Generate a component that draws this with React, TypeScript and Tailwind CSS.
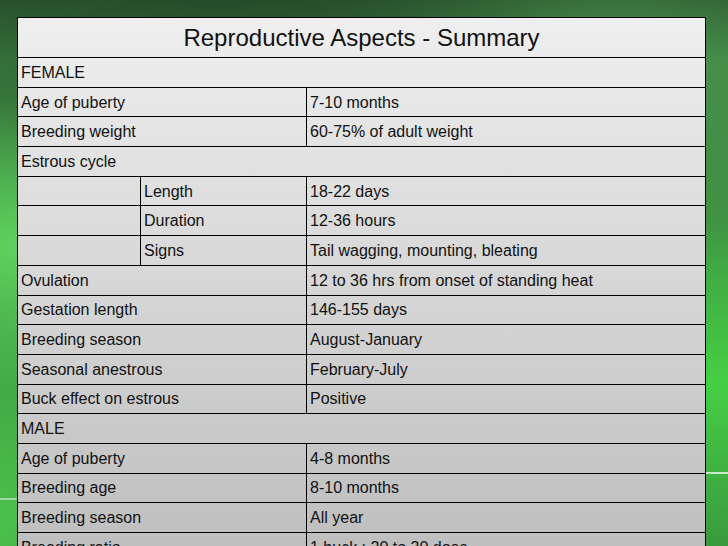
import React from "react";

type Row =
  | { kind: "full"; label: string }
  | { kind: "two"; label: string; value: string }
  | { kind: "three"; label: string; value: string };

const rows: Row[] = [
  { kind: "full", label: "FEMALE" },
  { kind: "two", label: "Age of puberty", value: "7-10 months" },
  { kind: "two", label: "Breeding weight", value: "60-75% of adult weight" },
  { kind: "full", label: "Estrous cycle" },
  { kind: "three", label: "Length", value: "18-22 days" },
  { kind: "three", label: "Duration", value: "12-36 hours" },
  { kind: "three", label: "Signs", value: "Tail wagging, mounting, bleating" },
  { kind: "two", label: "Ovulation", value: "12 to 36 hrs from onset of standing heat" },
  { kind: "two", label: "Gestation length", value: "146-155 days" },
  { kind: "two", label: "Breeding season", value: "August-January" },
  { kind: "two", label: "Seasonal anestrous", value: "February-July" },
  { kind: "two", label: "Buck effect on estrous", value: "Positive" },
  { kind: "full", label: "MALE" },
  { kind: "two", label: "Age of puberty", value: "4-8 months" },
  { kind: "two", label: "Breeding age", value: "8-10 months" },
  { kind: "two", label: "Breeding season", value: "All year" },
  { kind: "two", label: "Breeding ratio", value: "1 buck : 20 to 30 does" },
];

function TableRow({ row }: { row: Row }) {
  const base = "flex h-[29.7px] shrink-0 border-b border-black";
  const cell = "flex items-center pl-[3px] pt-[1px] overflow-hidden whitespace-nowrap";
  if (row.kind === "full") {
    return (
      <div className={base}>
        <div className={`${cell} flex-1`}>{row.label}</div>
      </div>
    );
  }
  if (row.kind === "two") {
    return (
      <div className={base}>
        <div className={`${cell} w-[288px] shrink-0`}>{row.label}</div>
        <div className={`${cell} flex-1 border-l border-black`}>{row.value}</div>
      </div>
    );
  }
  return (
    <div className={base}>
      <div className={`${cell} w-[122px] shrink-0`}></div>
      <div className={`${cell} w-[166px] shrink-0 border-l border-black`}>{row.label}</div>
      <div className={`${cell} flex-1 border-l border-black`}>{row.value}</div>
    </div>
  );
}

export default function App() {
  return (
    <div className="relative h-[546px] w-[728px] overflow-hidden bg-[#3f8f3f] bg-[radial-gradient(ellipse_at_5%_45%,#5fd45f_0%,transparent_35%),radial-gradient(ellipse_at_98%_70%,#45cf45_0%,transparent_30%),radial-gradient(ellipse_at_30%_0%,#2f5f34_0%,transparent_45%),radial-gradient(ellipse_at_85%_5%,#4e9a52_0%,transparent_35%),radial-gradient(ellipse_at_0%_95%,#4bc04b_0%,transparent_30%),linear-gradient(180deg,#356d3a_0%,#3f9a42_50%,#3a9a3e_100%)]">
      {/* decorative light streaks in the background */}
      <div className="absolute left-[706px] top-[472px] h-[2px] w-[22px] bg-[#e8f5e8] opacity-80" />
      <div className="absolute left-[0px] top-[498px] h-[2px] w-[17px] bg-[#d8eed8] opacity-60" />
      <div className="absolute left-[0px] top-[0px] h-[60px] w-[728px] bg-[linear-gradient(180deg,rgba(20,40,20,0.35),transparent)]" />

      <div className="relative ml-[17px] mt-[17px] flex h-[560px] w-[689px] flex-col border-x border-t border-black bg-gradient-to-b from-[#efefef] to-[#bcbcbc] text-[16px] leading-none text-[#111] [font-family:'Liberation_Sans',Arial,sans-serif]">
        <div className="flex h-[40px] shrink-0 items-center justify-center border-b border-black pt-[1px] text-[24px]">
          Reproductive Aspects - Summary
        </div>
        {rows.map((r, i) => (
          <TableRow key={i} row={r} />
        ))}
      </div>
    </div>
  );
}
